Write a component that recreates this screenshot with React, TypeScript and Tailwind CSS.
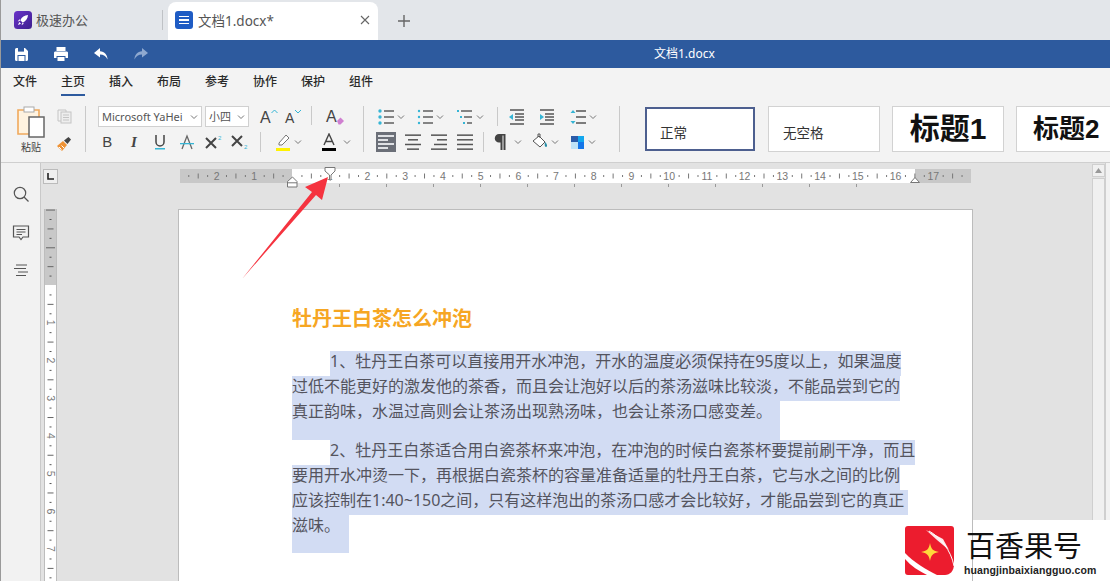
import React from "react";

const U = 37.72;

function Chev() {
  return (
    <svg width="8" height="6" viewBox="0 0 8 6" className="shrink-0">
      <path d="M1 1.5 L4 4.5 L7 1.5" fill="none" stroke="#777" strokeWidth="1" />
    </svg>
  );
}

function Ico({ children, w = 16, h = 16 }: { children: React.ReactNode; w?: number; h?: number }) {
  return (
    <svg width={w} height={h} viewBox={`0 0 ${w} ${h}`} className="shrink-0">
      {children}
    </svg>
  );
}

function Lines({ rows }: { rows: [number, number][] }) {
  return (
    <Ico>
      {rows.map(([a, b], i) => (
        <rect key={i} x={a} y={1 + i * (14 / (rows.length - 1 || 1)) - 0.6} width={b - a} height="1.5" fill="#555" />
      ))}
    </Ico>
  );
}

function ListIco({ kind }: { kind: number }) {
  return (
    <Ico>
      {[2, 8, 14].map((y, i) => (
        <g key={y}>
          {kind === 2 ? (
            <rect x={i * 3} y={y - 1} width="2" height="2" fill="#35b5d5" />
          ) : (
            <circle cx="2" cy={y} r={kind === 0 ? 1.7 : 1.2} fill="#35b5d5" />
          )}
          <rect x={kind === 2 ? 4 + i * 3 : 6} y={y - 0.7} width={kind === 2 ? 11 - i * 3 : 10} height="1.4" fill="#555" />
        </g>
      ))}
    </Ico>
  );
}

function Sep({ cls }: { cls: string }) {
  return <div className={`w-px bg-[#c9c9c9] shrink-0 ${cls}`} />;
}

function HRuler() {
  const nums = Array.from({ length: 21 }, (_, i) => i - 3);
  const zero = 112;
  return (
    <svg width="791" height="19" viewBox="0 0 791 19" className="block overflow-visible shrink-0">
      <rect x="0" y="0" width="791" height="14" fill="#c8c8c8" />
      <rect x="112" y="0" width="623" height="14" fill="#ffffff" />
      {nums.map((n) => {
        const x = zero + n * U;
        return (
          <g key={n}>
            {x > 5 && x < 790 && n !== 0 && (
              <text x={x} y="11" fontSize="10.5" textAnchor="middle" fill="#777" fontFamily="Liberation Sans, sans-serif">
                {Math.abs(n)}
              </text>
            )}
            {[0.25, 0.75].map((f) => (
              x + f * U < 788 && x + f * U > 3 ? <rect key={f} x={x + f * U} y="6" width="1" height="2" fill="#777" /> : null
            ))}
            {x + 0.5 * U < 788 && x + 0.5 * U > 3 ? <rect x={x + 0.5 * U} y="4.5" width="1" height="5" fill="#777" /> : null}
          </g>
        );
      })}
      {Array.from({ length: 12 }, (_, i) => (
        <rect key={i} x={159 + i * 47} y="15" width="1" height="3" fill="#999" />
      ))}
      <path d="M107.5 18 V12.5 L112.5 8 L117 12.5 V18 Z M107.5 13.8 H117" fill="#fff" stroke="#777" />
      <path d="M145 -1.5 H155 V2 L151 6 V11 H149.5 V6 L145 2 Z" fill="#fff" stroke="#777" />
      <path d="M730.5 13.5 L735 8.5 L739.5 13.5 Z" fill="#fff" stroke="#777" />
    </svg>
  );
}

function VRuler() {
  const nums = Array.from({ length: 10 }, (_, i) => i - 2);
  const zero = 76;
  return (
    <svg width="13" height="372" viewBox="0 0 13 372" className="block shrink-0">
      <rect x="0" y="0" width="13" height="372" fill="#ffffff" />
      <rect x="0" y="0" width="13" height="76" fill="#c8c8c8" />
      <rect x="0" y="0" width="1" height="372" fill="#bdbdbd" />
      <rect x="12" y="0" width="1" height="372" fill="#bdbdbd" />
      {nums.map((n) => {
        const y = zero + n * U;
        return (
          <g key={n}>
            {n > 0 ? (
              <text x="0" y="0" fontSize="10.5" textAnchor="middle" fill="#777" fontFamily="Liberation Sans, sans-serif" transform={`translate(2.5 ${y}) rotate(90)`}>
                {n}
              </text>
            ) : n < 0 ? (
              <rect x="2" y={y} width="9" height="1" fill="#666" />
            ) : null}
            {[0.25, 0.75].map((f) => (
              <rect key={f} x="5.5" y={y + f * U} width="2" height="1" fill="#555" />
            ))}
            <rect x="3.5" y={y + 0.5 * U} width="6" height="1" fill="#666" />
          </g>
        );
      })}
    </svg>
  );
}

function Line({ cls = "", children }: { cls?: string; children: React.ReactNode }) {
  return <div className={`w-fit bg-[#d2dcf3] whitespace-nowrap leading-[21px] ${cls}`}>{children}</div>;
}

export default function App() {
  return (
    <div className="relative w-[1110px] h-[581px] overflow-hidden flex flex-col border-l border-[#9a9a9a] font-['Noto_Sans','Noto_Sans_CJK_SC',sans-serif] text-[#333]">
      {/* Tab strip */}
      <div className="h-[40px] shrink-0 bg-[#e3e6ea] flex items-end">
        <div className="w-[161px] h-[38px] flex items-center pl-[13px] gap-[4px] pb-[2px]">
          <svg width="18" height="18" viewBox="0 0 18 18" className="shrink-0">
            <defs>
              <linearGradient id="rk" x1="0" y1="0" x2="1" y2="1">
                <stop offset="0" stopColor="#6a33c9" />
                <stop offset="1" stopColor="#3c1f8f" />
              </linearGradient>
            </defs>
            <rect width="18" height="18" rx="3.5" fill="url(#rk)" />
            <path d="M14 4 C10.5 4.3 7.8 6 6.3 9.2 L8.8 11.7 C12 10.2 13.7 7.5 14 4 Z M6 9.8 L3.8 10.4 L5.5 8 Z M8.2 12 L7.6 14.2 L10 12.5 Z M5.3 11 L4 14 L7 12.7 Z" fill="#fff" />
          </svg>
          <span className="text-[13px] text-[#555] pt-[2px]">极速办公</span>
        </div>
        <div className="w-px h-[20px] bg-[#bfc2c6] mb-[10px]" />
        <div className="ml-[5px] w-[210px] h-[38px] bg-white rounded-t-[8px] flex items-center pl-[7px] pb-[2px]">
          <div className="w-[18px] h-[18px] rounded-[3px] bg-[#1f5cc4] flex flex-col items-center justify-center gap-[2px] shrink-0">
            <div className="w-[10px] h-[1.5px] bg-white" />
            <div className="w-[10px] h-[1.5px] bg-white" />
            <div className="w-[10px] h-[1.5px] bg-white" />
          </div>
          <span className="ml-[5px] text-[13.5px] text-[#555] flex-1 pt-[2px]">文档1.docx*</span>
          <svg width="10" height="10" viewBox="0 0 10 10" className="mr-[8px]">
            <path d="M1 1 L9 9 M9 1 L1 9" stroke="#666" strokeWidth="1.1" />
          </svg>
        </div>
        <svg width="12" height="12" viewBox="0 0 12 12" className="ml-[20px] mb-[13px]">
          <path d="M6 0 V12 M0 6 H12" stroke="#666" strokeWidth="1.4" />
        </svg>
      </div>

      {/* Title bar */}
      <div className="relative h-[28px] shrink-0 bg-[#2d5a9e] flex items-center pl-[13px]">
        <svg width="15" height="15" viewBox="0 0 15 15" className="shrink-0">
          <path d="M1 2.5 A1.5 1.5 0 0 1 2.5 1 H11 L14 4 V12.5 A1.5 1.5 0 0 1 12.5 14 H2.5 A1.5 1.5 0 0 1 1 12.5 Z" fill="#fff" />
          <rect x="4" y="1" width="6" height="3.6" fill="#2d5a9e" />
          <rect x="3.5" y="8" width="8" height="6" fill="#2d5a9e" />
          <rect x="4.5" y="9" width="6" height="5" fill="#fff" />
        </svg>
        <svg width="16" height="16" viewBox="0 0 16 16" className="ml-[24px] shrink-0">
          <rect x="3.5" y="1" width="9" height="4" fill="#fff" />
          <path d="M1 6.5 A1.5 1.5 0 0 1 2.5 5.5 H13.5 A1.5 1.5 0 0 1 15 6.5 V12 H12.5 V10 H3.5 V12 H1 Z" fill="#fff" />
          <rect x="4.5" y="11" width="7" height="4" fill="#fff" />
        </svg>
        <svg width="16" height="14" viewBox="0 0 16 14" className="ml-[24px] shrink-0">
          <path d="M7 1 L1 6 L7 10.5 V7.5 C10.5 7.5 13 9 14.5 12.5 C14.5 8 11.5 4.5 7 4.3 Z" fill="#fff" />
        </svg>
        <svg width="16" height="14" viewBox="0 0 16 14" className="ml-[24px] shrink-0">
          <path d="M9 1 L15 6 L9 10.5 V7.5 C5.5 7.5 3 9 1.5 12.5 C1.5 8 4.5 4.5 9 4.3 Z" fill="#8fa9d0" />
        </svg>
        <span className="absolute left-[653px] top-[5px] text-[12px] leading-[18px] text-white">文档1.docx</span>
      </div>

      {/* Menu */}
      <div className="h-[28px] shrink-0 bg-[#f3f3f3] flex pl-[12px] gap-[24px] text-[12px] font-medium text-[#2a2a2a]">
        {["文件", "主页", "插入", "布局", "参考", "协作", "保护", "组件"].map((t) => (
          <div key={t} className={`h-[28px] leading-[27px] ${t === "主页" ? "border-b-2 border-[#2d5a9e]" : ""}`}>
            {t}
          </div>
        ))}
      </div>

      {/* Toolbar */}
      <div className="h-[67px] shrink-0 bg-[#f3f3f3] border-b border-[#cfcfcf] flex items-start pt-[10px]">
        <div className="w-[84px] shrink-0 flex">
          <div className="ml-[14px] w-[32px] flex flex-col items-center">
            <svg width="30" height="32" viewBox="0 0 30 32">
              <path d="M2 4 H23 V28 H2 Z" fill="#fff3e0" stroke="#f0a95c" strokeWidth="1.6" />
              <rect x="8" y="1" width="10" height="5" fill="#fff" stroke="#aaa" />
              <rect x="13" y="11" width="15" height="20" fill="#fff" stroke="#666" strokeWidth="1.5" />
            </svg>
            <span className="mt-[2px] text-[10px] leading-[14px] text-[#444]">粘贴</span>
          </div>
          <div className="ml-[9px] flex flex-col items-center pt-[3px]">
            <svg width="15" height="15" viewBox="0 0 15 15">
              <path d="M1 1 H9 V3 M1 1 V12 H4" fill="none" stroke="#c4c4c4" />
              <rect x="4" y="3" width="10" height="11" fill="#eee" stroke="#c4c4c4" />
              <path d="M6 6 H12 M6 8.5 H12 M6 11 H12" stroke="#c4c4c4" />
            </svg>
            <svg width="16" height="16" viewBox="0 0 16 16" className="mt-[12px]">
              <path d="M1 10 L7 5 L11 9 L6 15 Z" fill="#ef9234" />
              <path d="M3 11 L5.5 13.5 M5.5 9.5 L8 12" stroke="#fff" />
              <path d="M8 4.5 L11.5 8 L15 3.5 L12.5 1 Z" fill="#444" />
            </svg>
          </div>
        </div>
        <Sep cls="h-[46px]" />
        <div className="ml-[8px] w-[269px] shrink-0 flex flex-col">
          <div className="h-[21px] flex pl-[4px]">
            <div className="w-[104px] h-[21px] shrink-0 bg-white border border-[#d0d0d0] flex items-center justify-between pl-[3px] pr-[3px] pt-px text-[11px] text-[#555]">
              <span className="whitespace-nowrap">Microsoft YaHei</span>
              <Chev />
            </div>
            <div className="ml-[3px] w-[44px] h-[21px] shrink-0 bg-white border border-[#d0d0d0] flex items-center justify-between px-[3px] pt-px text-[11px] text-[#555]">
              <span>小四</span>
              <Chev />
            </div>
            <div className="w-[31px] shrink-0 flex items-center pl-[11px]">
              <svg width="20" height="16" viewBox="0 0 20 16" className="shrink-0 overflow-visible">
                <text x="0" y="14" fontSize="16" fill="#444" fontFamily="Liberation Sans, sans-serif">A</text>
                <path d="M11.5 4 L14.5 1 L17.5 4" fill="none" stroke="#35b5d5" strokeWidth="1" />
              </svg>
            </div>
            <div className="w-[25px] shrink-0 flex items-center pl-[5px]">
              <svg width="20" height="16" viewBox="0 0 20 16" className="shrink-0 overflow-visible">
                <text x="0" y="14" fontSize="14" fill="#444" fontFamily="Liberation Sans, sans-serif">A</text>
                <path d="M10 1 L13 4 L16 1" fill="none" stroke="#35b5d5" strokeWidth="1" />
              </svg>
            </div>
            <Sep cls="ml-[6px] h-[19px]" />
            <div className="w-[46px] shrink-0 flex justify-center items-center">
              <svg width="18" height="18" viewBox="0 0 18 18" className="overflow-visible">
                <text x="0" y="14" fontSize="16" fill="#444" fontFamily="Liberation Sans, sans-serif">A</text>
                <path d="M11 13 L14.5 9.5 L18 13 L14.5 16.5 H12.5 Z" fill="#cf7fd0" />
              </svg>
            </div>
          </div>
          <div className="mt-[5px] h-[20px] flex items-center">
            <div className="w-[26.6px] text-center text-[15px] leading-[20px] text-[#444] font-['Liberation_Sans',sans-serif]">B</div>
            <div className="w-[26.6px] text-center text-[15px] leading-[20px] text-[#444] italic font-['Liberation_Serif',serif] font-bold">I</div>
            <div className="w-[26.6px] flex justify-center">
              <svg width="14" height="16" viewBox="0 0 14 16">
                <path d="M3 1 V8 A4 4 0 0 0 11 8 V1" fill="none" stroke="#444" strokeWidth="1.5" />
                <rect x="2" y="14" width="10" height="1.5" fill="#35b5d5" />
              </svg>
            </div>
            <div className="w-[26.6px] flex justify-center">
              <svg width="14" height="16" viewBox="0 0 14 16">
                <path d="M2 15 L7 2 L12 15" fill="none" stroke="#666" strokeWidth="1.3" />
                <rect x="0" y="9" width="14" height="1.3" fill="#35b5d5" />
              </svg>
            </div>
            <div className="w-[26.6px] flex justify-center">
              <svg width="18" height="16" viewBox="0 0 18 16">
                <path d="M1 4 L11 14 M11 4 L1 14" stroke="#444" strokeWidth="2" />
                <text x="13" y="6" fontSize="6" fill="#35b5d5" fontFamily="Liberation Sans, sans-serif">2</text>
              </svg>
            </div>
            <div className="w-[27px] flex justify-center">
              <svg width="18" height="16" viewBox="0 0 18 16">
                <path d="M1 2 L11 12 M11 2 L1 12" stroke="#444" strokeWidth="2" />
                <text x="13" y="15" fontSize="6" fill="#35b5d5" fontFamily="Liberation Sans, sans-serif">2</text>
              </svg>
            </div>
            <Sep cls="ml-[6px] h-[20px]" />
            <div className="w-[46px] pl-[14px] flex items-center gap-[3px]">
              <svg width="16" height="18" viewBox="0 0 16 18" className="shrink-0">
                <path d="M4 10 L11 2 L14 5 L7 12 H4 Z" fill="#fff" stroke="#777" />
                <rect x="1" y="15" width="14" height="3" fill="#fff200" />
              </svg>
              <Chev />
            </div>
            <div className="w-[56px] pl-[14px] flex items-center gap-[6px]">
              <svg width="16" height="18" viewBox="0 0 16 18" className="shrink-0">
                <path d="M3 12 L8 1 L13 12 M5 8.5 H11" fill="none" stroke="#444" strokeWidth="1.4" />
                <rect x="1" y="15" width="14" height="3" fill="#000" />
              </svg>
              <Chev />
            </div>
          </div>
        </div>
        <Sep cls="h-[46px]" />
        <div className="w-[255px] shrink-0 flex flex-col">
          <div className="h-[21px] flex items-center">
            <div className="ml-[14px] flex items-center gap-[3px]"><ListIco kind={0} /><Chev /></div>
            <div className="ml-[12px] flex items-center gap-[3px]"><ListIco kind={1} /><Chev /></div>
            <div className="ml-[13px] flex items-center gap-[3px]"><ListIco kind={2} /><Chev /></div>
            <Sep cls="ml-[13px] h-[19px]" />
            <div className="ml-[10px]">
              <svg width="16" height="16" viewBox="0 0 16 16" className="block">
                <path d="M2 1 H16 M7 5 H16 M7 8 H16 M7 11 H16 M2 15 H16" stroke="#555" strokeWidth="1.3" />
                <path d="M5 5 L1 8 L5 11 Z" fill="#35b5d5" />
              </svg>
            </div>
            <div className="ml-[16px]">
              <svg width="16" height="16" viewBox="0 0 16 16" className="block">
                <path d="M0 1 H14 M5 5 H14 M5 8 H14 M5 11 H14 M0 15 H14" stroke="#555" strokeWidth="1.3" />
                <path d="M0 5 L4 8 L0 11 Z" fill="#35b5d5" />
              </svg>
            </div>
            <div className="ml-[14px] flex items-center gap-[3px]">
              <svg width="16" height="16" viewBox="0 0 16 16" className="block">
                <path d="M6 2 H16 M6 8 H16 M6 14 H16" stroke="#555" strokeWidth="1.5" />
                <path d="M0.5 4 L3 1 L5.5 4 Z M0.5 12 L3 15 L5.5 12 Z" fill="#35b5d5" />
              </svg>
              <Chev />
            </div>
          </div>
          <div className="mt-[5px] h-[20px] flex items-center">
            <div className="ml-[12px] w-[20px] h-[20px] bg-[#6b6f78] flex flex-col justify-center gap-[2.5px] pl-[2px] shrink-0">
              <div className="w-[16px] h-[1.5px] bg-[#dfe1e5]" />
              <div className="w-[10px] h-[1.5px] bg-[#dfe1e5]" />
              <div className="w-[16px] h-[1.5px] bg-[#dfe1e5]" />
              <div className="w-[10px] h-[1.5px] bg-[#dfe1e5]" />
            </div>
            <div className="ml-[9px]"><Lines rows={[[0, 16], [3, 13], [0, 16], [2, 14]]} /></div>
            <div className="ml-[10px]"><Lines rows={[[0, 16], [6, 16], [3, 16], [0, 16]]} /></div>
            <div className="ml-[10px]"><Lines rows={[[0, 16], [0, 16], [0, 16], [0, 16]]} /></div>
            <Sep cls="ml-[10px] h-[20px]" />
            <div className="ml-[9px] flex items-center gap-[5px]">
              <svg width="16" height="18" viewBox="0 0 16 18" className="shrink-0">
                <path d="M11 1 H6 A4.2 4.2 0 0 0 6 9.5 H7.5 V17 H9.5 V2.5 H10.5 V17 H12.5 V1 Z" fill="#444" />
              </svg>
              <Chev />
            </div>
            <div className="ml-[10px] flex items-center gap-[3px]">
              <svg width="16" height="18" viewBox="0 0 16 18" className="shrink-0">
                <path d="M1 8 L7 3 L13 9 L8 14 Z" fill="#fff" stroke="#555" />
                <path d="M6 4 V1 H8 V5" fill="none" stroke="#555" />
                <path d="M13 9 C15.5 11 15.5 14 14 14 C12.5 14 12.5 11 13 9 Z" fill="#2a8fa8" />
              </svg>
              <Chev />
            </div>
            <div className="ml-[12px] flex items-center gap-[4px]">
              <div className="grid grid-cols-2 grid-rows-2 w-[13px] h-[13px] shrink-0">
                <div className="bg-[#2b5ba8]" />
                <div className="bg-[#12a7ee]" />
                <div className="bg-[#bfe3f7]" />
                <div className="bg-[#1576e8]" />
              </div>
              <Chev />
            </div>
          </div>
        </div>
        <Sep cls="h-[46px]" />
        <div className="ml-[25px] flex items-start shrink-0">
          <div className="mt-px h-[44px] w-[110px] shrink-0 bg-white border-2 border-[#4d5f8f] flex items-center pl-[13px] pt-[8px]">
            <span className="text-[13.5px] text-[#333]">正常</span>
          </div>
          <div className="ml-[13px] h-[46px] w-[112px] shrink-0 bg-white border border-[#d2d2d2] flex items-center pl-[14px] pt-[8px]">
            <span className="text-[13.5px] text-[#333]">无空格</span>
          </div>
          <div className="ml-[12px] h-[46px] w-[112px] shrink-0 bg-white border border-[#d2d2d2] flex items-center justify-center">
            <span className="text-[30px] leading-[40px] font-bold text-[#111] font-['Liberation_Sans','Noto_Sans_CJK_SC',sans-serif]">标题1</span>
          </div>
          <div className="ml-[12px] h-[46px] w-[112px] shrink-0 bg-white border border-[#d2d2d2] flex items-center pl-[16px]">
            <span className="text-[26px] leading-[40px] font-bold text-[#111] font-['Liberation_Sans','Noto_Sans_CJK_SC',sans-serif]">标题2</span>
          </div>
        </div>
      </div>

      {/* Workspace */}
      <div className="flex-1 min-h-0 flex bg-[#e2e2e2]">
        <div className="w-[40px] shrink-0 bg-[#f2f2f2] border-r border-[#c9c9c9] flex flex-col items-center pt-[22px]">
          <svg width="18" height="18" viewBox="0 0 18 18">
            <circle cx="8" cy="8" r="5.7" fill="none" stroke="#555" strokeWidth="1.2" />
            <path d="M12 12 L16.5 16.5" stroke="#555" strokeWidth="1.3" />
          </svg>
          <svg width="18" height="18" viewBox="0 0 18 18" className="mt-[21px]">
            <path d="M1.5 2 H16.5 V13 H11 L9 15.5 L7 13 H1.5 Z" fill="none" stroke="#555" strokeWidth="1.2" />
            <path d="M4.5 5.5 H13.5 M4.5 8 H13.5 M4.5 10.5 H10" stroke="#555" />
          </svg>
          <svg width="16" height="14" viewBox="0 0 16 14" className="mt-[22px]">
            <path d="M3 1 H14 M1 4.5 H13 M5 8 H15 M3 11.5 H13" stroke="#555" strokeWidth="1.1" />
          </svg>
        </div>
        <div className="w-[1051px] shrink-0 flex flex-col">
          <div className="flex pt-[6px] h-[46px] shrink-0">
            <div className="ml-[2px] w-[15px] h-[15px] shrink-0 bg-[#efefef] border border-[#bbb] flex items-center justify-center">
              <svg width="7" height="7" viewBox="0 0 7 7">
                <path d="M1 0 V6 H7" fill="none" stroke="#222" strokeWidth="1.6" />
              </svg>
            </div>
            <div className="ml-[122px] shrink-0"><HRuler /></div>
          </div>
          <div className="flex-1 min-h-0 flex">
            <div className="ml-[3px] shrink-0"><VRuler /></div>
            <div className="ml-[121px] w-[795px] shrink-0 bg-white border-l border-t border-r border-[#bcbcbc] pl-[113px] pt-[96px]">
              <div className="h-[26px] leading-[26px] text-[20px] font-bold text-[#f6a623] whitespace-nowrap">牡丹王白茶怎么冲泡</div>
              <div className="mt-[19px] text-[16px] text-[#54545e]">
                <Line cls="ml-[38px] h-[25px]">1、牡丹王白茶可以直接用开水冲泡，开水的温度必须保持在95度以上，如果温度</Line>
                <Line cls="h-[25px]">过低不能更好的激发他的茶香，而且会让泡好以后的茶汤滋味比较淡，不能品尝到它的</Line>
                <Line cls="h-[39px] pr-[8px]">真正韵味，水温过高则会让茶汤出现熟汤味，也会让茶汤口感变差。</Line>
                <Line cls="ml-[38px] h-[25px]">2、牡丹王白茶适合用白瓷茶杯来冲泡，在冲泡的时候白瓷茶杯要提前刷干净，而且</Line>
                <Line cls="h-[25px]">要用开水冲烫一下，再根据白瓷茶杯的容量准备适量的牡丹王白茶，它与水之间的比例</Line>
                <Line cls="h-[25px] pr-[4px]">应该控制在1:40~150之间，只有这样泡出的茶汤口感才会比较好，才能品尝到它的真正</Line>
                <Line cls="h-[38px] pr-[9px]">滋味。</Line>
              </div>
            </div>
          </div>
        </div>
        <div className="w-[14px] shrink-0 flex flex-col border-r border-[#cfcfcf] pt-px">
          <div className="h-[13px] bg-[#f0f0f0] border border-[#cfcfcf] flex items-center justify-center">
            <svg width="7" height="5" viewBox="0 0 7 5"><path d="M0 5 L3.5 0 L7 5 Z" fill="#999" /></svg>
          </div>
          <div className="flex-1 mt-[1px] bg-[#f0f0f0] border border-[#cfcfcf]" />
        </div>
        <div className="flex-1 bg-[#f2f2f2]" />
      </div>

      {/* Pointer arrow drawn over the ruler */}
      <svg width="110" height="125" viewBox="0 0 110 125" className="absolute left-[232px] top-[165px]">
        <path d="M9 114 L79 27 L72 22 L95 12 L89 35 L83 30 Z" fill="#f5333f" />
      </svg>

      {/* Watermark */}
      <div className="absolute left-[972px] right-0 top-[520px] bottom-0 bg-white" />
      <div className="absolute left-[904px] top-[526px] flex">
        <svg width="50" height="49" viewBox="0 0 50 49" className="shrink-0">
          <path d="M3 0 H46 A3 3 0 0 1 49 3 V38 C49 45 45 49 40 49 H32 C22 44 8 36 0 27 V3 A3 3 0 0 1 3 0 Z" fill="#ec1c2e" />
          <path d="M0 33 C6 40 14 45 22 49 H3 A3 3 0 0 1 0 46 Z" fill="#ec1c2e" />
          <path d="M21 4 L38 13 L44 24 L32 14 Z" fill="#fff" opacity="0.9" />
          <path d="M24 5 C35 11 46 24 49 40" fill="none" stroke="#fff" strokeWidth="1" />
          <path d="M25 25 C26 31 28 33 34 34 C28 35 26 37 25 43 C24 37 22 35 16 34 C22 33 24 31 25 25 Z" fill="#ffd93b" transform="translate(0 -8)" />
        </svg>
        <div className="ml-[9px] flex flex-col">
          <span className="text-[29px] leading-[36px] pl-[2px] font-['Noto_Sans_CJK_SC',sans-serif] text-[#111] whitespace-nowrap">百香果号</span>
          <span className="mt-[1px] text-[10.5px] leading-[14px] font-bold tracking-[0.1px] text-[#222] font-['Liberation_Sans',sans-serif] whitespace-nowrap">huangjinbaixiangguo.com</span>
        </div>
      </div>
    </div>
  );
}
